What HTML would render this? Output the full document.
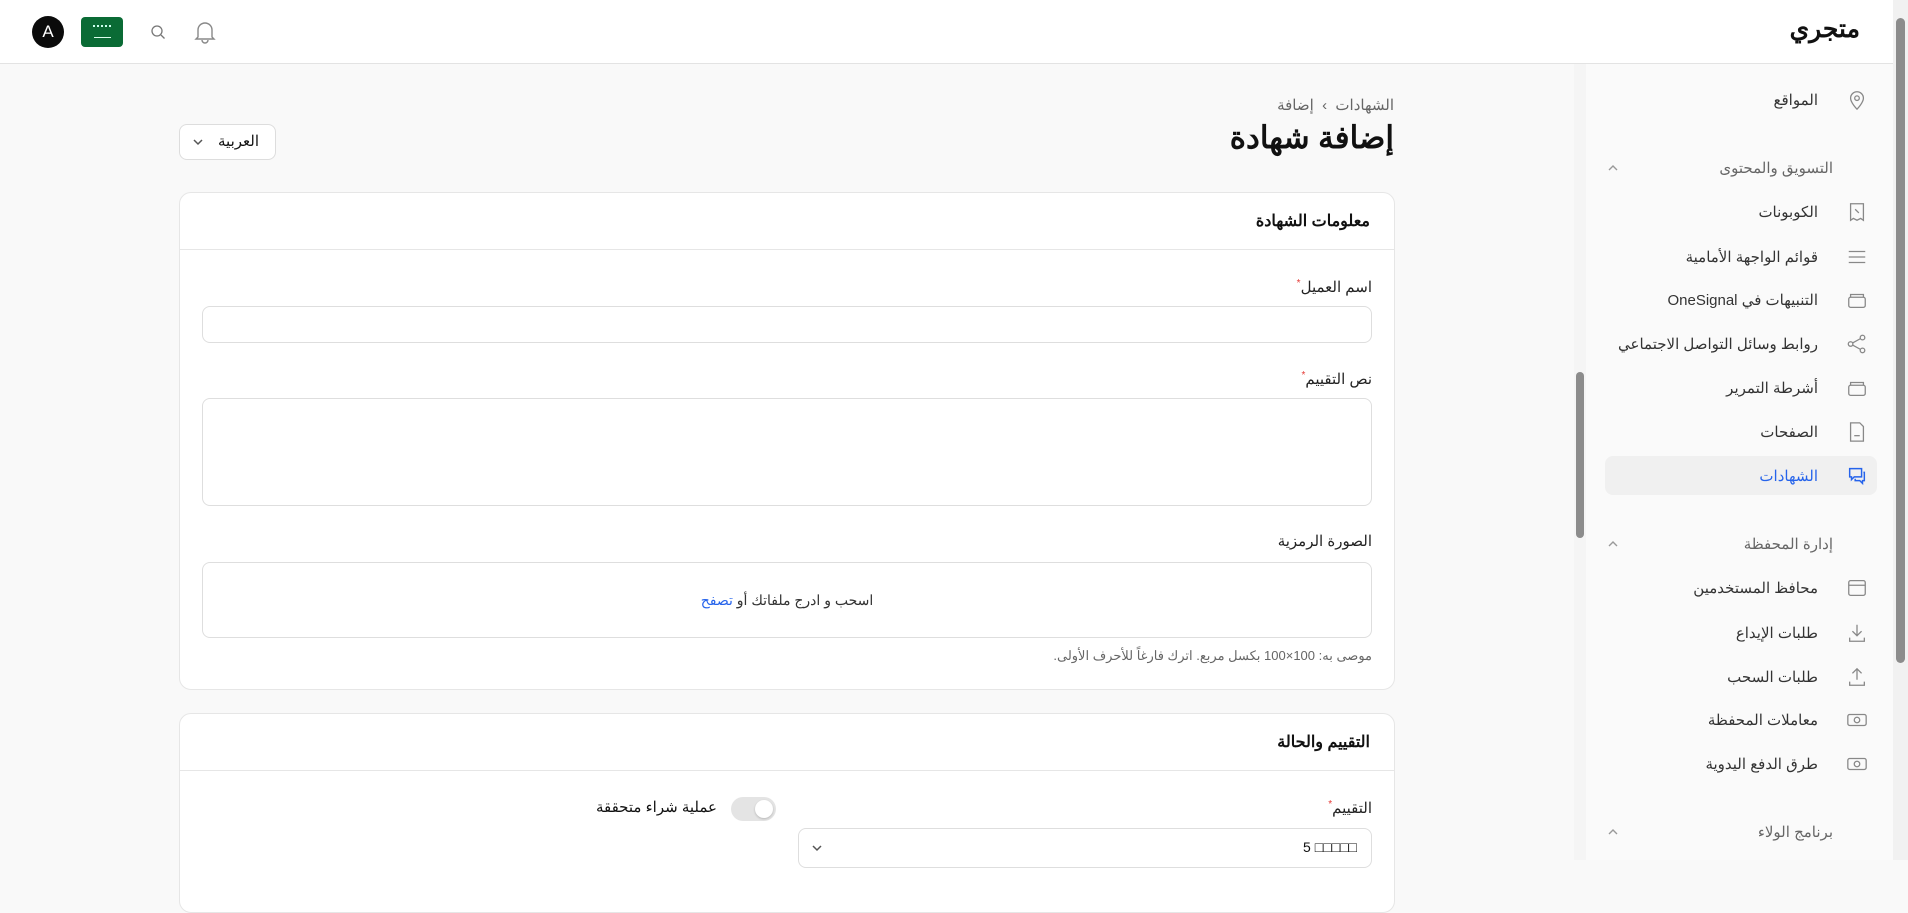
<!DOCTYPE html>
<html dir="rtl"><head><meta charset="utf-8"><style>
*{box-sizing:border-box;margin:0;padding:0}
body{width:1908px;height:860px;overflow:hidden;background:#f9f9f9;font-family:"Liberation Sans","Noto Sans CJK SC",sans-serif;color:#111;position:relative}
.a{position:absolute}
.hdr{left:0;top:0;width:1908px;height:64px;background:#fff;border-bottom:1px solid #e3e3e3}
.sb{left:1586px;top:64px;width:307px;height:796px;background:#fafafa}
.item{position:absolute;right:75px;font-size:15px;color:#333;white-space:nowrap;transform:translateY(-50%)}
.ic{position:absolute;right:25px;transform:translateY(-50%);width:22px;height:22px}
.sec{position:absolute;right:60px;font-size:15px;color:#666;transform:translateY(-50%)}
.chev{position:absolute;left:20px;transform:translateY(-50%)}
.card{background:#fff;border:1px solid #e6e6e6;border-radius:12px}
.lbl{position:absolute;right:22px;font-size:15px;color:#222;transform:translateY(-50%)}
.lbl b{color:#e53935;font-size:10px;vertical-align:top;font-weight:normal}
.inp{position:absolute;left:22px;right:22px;border:1px solid #dedede;border-radius:8px;background:#fff}
</style></head><body>
<div class="a hdr"></div>
<div class="a" style="right:48px;top:14px;font-size:25px;font-weight:bold">متجري</div>
<div class="a" style="left:32px;top:16px;width:32px;height:32px;border-radius:50%;background:#0b0b0b;color:#fff;font-size:17px;text-align:center;line-height:32px">A</div>
<div class="a" style="left:81px;top:17px;width:42px;height:30px;border-radius:4px;background:#0a6b35"><div class="a" style="left:12px;top:8px;width:18px;height:5px;border-top:2px dotted #cfe;"></div><div class="a" style="left:13px;top:20px;width:17px;height:1px;background:#dfe"></div></div>
<svg class="a" style="left:150px;top:24px" width="16" height="16" viewBox="0 0 16 16" fill="none" stroke="#777" stroke-width="1.3"><circle cx="7" cy="7" r="5"/><path d="M11 11l3.5 3.5"/></svg>
<svg class="a" style="left:194px;top:20px" width="22" height="24" viewBox="0 0 22 24" fill="none" stroke="#888" stroke-width="1.4"><path d="M4 17V10a7 7 0 0114 0v7l2 2H2z"/><path d="M8 20a3 3 0 006 0"/></svg>

<div class="a sb">
<svg class="ic" style="top:36px" viewBox="0 0 24 24" fill="none" stroke="#888" stroke-width="1.4"><path d="M12 22s-7-7-7-12a7 7 0 0114 0c0 5-7 12-7 12z"/><circle cx="12" cy="10" r="2.5"/></svg>
<div class="item" style="top:36px">المواقع</div>
<div class="sec" style="top:104px">التسويق والمحتوى</div>
<svg class="chev" style="top:104px" width="14" height="10" viewBox="0 0 14 10" fill="none" stroke="#999" stroke-width="1.4"><path d="M3 7l4-4 4 4"/></svg>
<svg class="ic" style="top:148px" viewBox="0 0 24 24" fill="none" stroke="#888" stroke-width="1.4"><path d="M5 3h14v18l-3-2-4 2-4-2-3 2z"/><path d="M10 9l4 4"/></svg>
<div class="item" style="top:148px">الكوبونات</div>
<svg class="ic" style="top:193px" viewBox="0 0 24 24" fill="none" stroke="#888" stroke-width="1.4"><path d="M3 6h18M3 12h18M3 18h18"/></svg>
<div class="item" style="top:193px">قوائم الواجهة الأمامية</div>
<svg class="ic" style="top:236px" viewBox="0 0 24 24" fill="none" stroke="#888" stroke-width="1.4"><rect x="3" y="9" width="18" height="11" rx="2"/><path d="M5 9V6h14v3"/></svg>
<div class="item" style="top:236px">التنبيهات في OneSignal</div>
<svg class="ic" style="top:280px" viewBox="0 0 24 24" fill="none" stroke="#888" stroke-width="1.4"><circle cx="18" cy="5" r="2.5"/><circle cx="5" cy="12" r="2.5"/><circle cx="18" cy="19" r="2.5"/><path d="M7 11l9-5M7 13l9 5"/></svg>
<div class="item" style="top:280px">روابط وسائل التواصل الاجتماعي</div>
<svg class="ic" style="top:324px" viewBox="0 0 24 24" fill="none" stroke="#888" stroke-width="1.4"><rect x="3" y="9" width="18" height="11" rx="2"/><path d="M5 9V6h14v3"/></svg>
<div class="item" style="top:324px">أشرطة التمرير</div>
<svg class="ic" style="top:368px" viewBox="0 0 24 24" fill="none" stroke="#888" stroke-width="1.4"><path d="M5 2h10l4 4v16H5z"/><path d="M9 16h6"/></svg>
<div class="item" style="top:368px">الصفحات</div>
<div class="a" style="left:19px;top:392px;width:272px;height:39px;background:#f0f0f0;border-radius:8px"></div>
<svg class="ic" style="top:412px" viewBox="0 0 24 24" fill="none" stroke="#2563eb" stroke-width="1.6"><path d="M4 4h13v9H9l-3 3v-3H4z"/><path d="M19 8h1v9h-2v3l-3-3h-5v-2"/></svg>
<div class="item" style="top:412px;color:#2563eb">الشهادات</div>
<div class="sec" style="top:480px">إدارة المحفظة</div>
<svg class="chev" style="top:480px" width="14" height="10" viewBox="0 0 14 10" fill="none" stroke="#999" stroke-width="1.4"><path d="M3 7l4-4 4 4"/></svg>
<svg class="ic" style="top:524px" viewBox="0 0 24 24" fill="none" stroke="#888" stroke-width="1.4"><rect x="3" y="4" width="18" height="16" rx="2"/><path d="M3 9h18"/></svg>
<div class="item" style="top:524px">محافظ المستخدمين</div>
<svg class="ic" style="top:569px" viewBox="0 0 24 24" fill="none" stroke="#888" stroke-width="1.4"><path d="M12 3v12M7 10l5 5 5-5M4 17v4h16v-4"/></svg>
<div class="item" style="top:569px">طلبات الإيداع</div>
<svg class="ic" style="top:613px" viewBox="0 0 24 24" fill="none" stroke="#888" stroke-width="1.4"><path d="M12 15V3M7 8l5-5 5 5M4 17v4h16v-4"/></svg>
<div class="item" style="top:613px">طلبات السحب</div>
<svg class="ic" style="top:656px" viewBox="0 0 24 24" fill="none" stroke="#888" stroke-width="1.4"><rect x="2" y="6" width="20" height="12" rx="2"/><circle cx="12" cy="12" r="3"/></svg>
<div class="item" style="top:656px">معاملات المحفظة</div>
<svg class="ic" style="top:700px" viewBox="0 0 24 24" fill="none" stroke="#888" stroke-width="1.4"><rect x="2" y="6" width="20" height="12" rx="2"/><circle cx="12" cy="12" r="3"/></svg>
<div class="item" style="top:700px">طرق الدفع اليدوية</div>
<div class="sec" style="top:768px">برنامج الولاء</div>
<svg class="chev" style="top:768px" width="14" height="10" viewBox="0 0 14 10" fill="none" stroke="#999" stroke-width="1.4"><path d="M3 7l4-4 4 4"/></svg>
</div>
<div class="a" style="left:1893px;top:0;width:15px;height:860px;background:#f1f1f1"></div>
<div class="a" style="left:1896px;top:18px;width:9px;height:645px;background:#8c8c8c;border-radius:5px"></div>
<div class="a" style="left:1574px;top:64px;width:12px;height:796px;background:#f5f5f5"></div>
<div class="a" style="left:1576px;top:372px;width:8px;height:166px;background:#8c8c8c;border-radius:4px"></div>

<div class="a" style="right:514px;top:96px;font-size:15px;color:#666">الشهادات &nbsp;›&nbsp; إضافة</div>
<div class="a" style="right:514px;top:120px;font-size:31px;font-weight:bold">إضافة شهادة</div>
<div class="a" style="left:179px;top:124px;width:97px;height:36px;background:#fff;border:1px solid #ddd;border-radius:8px;font-size:15px;line-height:34px;padding-right:16px">العربية<svg class="a" style="left:12px;top:12px" width="12" height="10" viewBox="0 0 12 10" fill="none" stroke="#555" stroke-width="1.5"><path d="M2 3l4 4 4-4"/></svg></div>

<div class="a card" style="left:179px;top:192px;width:1216px;height:498px">
<div class="a" style="left:0;right:0;top:56px;border-top:1px solid #e6e6e6"></div>
<div class="a" style="right:24px;top:18px;font-size:16px;font-weight:bold">معلومات الشهادة</div>
<div class="lbl" style="top:94px">اسم العميل<b>*</b></div>
<div class="inp" style="top:113px;height:37px"></div>
<div class="lbl" style="top:186px">نص التقييم<b>*</b></div>
<div class="inp" style="top:205px;height:108px"></div>
<div class="lbl" style="top:348px">الصورة الرمزية</div>
<div class="inp" style="top:369px;height:76px;text-align:center;line-height:74px;font-size:14px;color:#333">اسحب و ادرج ملفاتك أو <span style="color:#2563eb">تصفح</span></div>
<div class="a" style="right:22px;top:455px;font-size:13px;color:#666">موصى به: 100×100 بكسل مربع. اترك فارغاً للأحرف الأولى.</div>
</div>

<div class="a card" style="left:179px;top:713px;width:1216px;height:200px">
<div class="a" style="left:0;right:0;top:56px;border-top:1px solid #e6e6e6"></div>
<div class="a" style="right:24px;top:18px;font-size:16px;font-weight:bold">التقييم والحالة</div>
<div class="lbl" style="top:94px">التقييم<b>*</b></div>
<div class="a" style="right:22px;width:574px;top:114px;height:40px;border:1px solid #dedede;border-radius:8px;font-size:14px;padding:10px 14px 0 0">□□□□□ 5<svg class="a" style="left:12px;top:14px" width="12" height="10" viewBox="0 0 12 10" fill="none" stroke="#555" stroke-width="1.5"><path d="M2 3l4 4 4-4"/></svg></div>
<div class="a" style="right:677px;top:84px;font-size:15px">عملية شراء متحققة</div>
<div class="a" style="left:551px;top:83px;width:45px;height:24px;border-radius:12px;background:#e4e4e4"><div class="a" style="left:24px;top:3px;width:18px;height:18px;border-radius:50%;background:#fff;box-shadow:0 1px 2px rgba(0,0,0,.2)"></div></div>
</div>
</body></html>
